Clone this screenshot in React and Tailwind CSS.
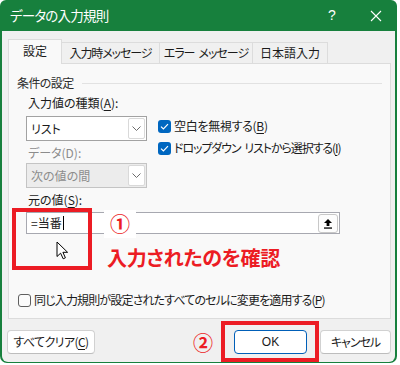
import React from 'react';

// 共通フォント（プロポーショナル仮名）
const jp = "font-['Noto_Sans_CJK_JP',sans-serif] [font-feature-settings:'palt']";

function Chevron({ className }) {
  return (
    <svg width="9" height="5" viewBox="0 0 9 5" className={className}>
      <path d="M0.5 0.5 L4.5 4.5 L8.5 0.5" fill="none" stroke="currentColor" strokeWidth="1" />
    </svg>
  );
}

function CheckBox({ checked }) {
  if (checked) {
    return (
      <div className="w-[13px] h-[13px] rounded-[3px] bg-[#0067c0] flex items-center justify-center flex-shrink-0">
        <svg width="9" height="7" viewBox="0 0 9 7">
          <path d="M1 3.6 L3.4 6 L8 1.2" fill="none" stroke="white" strokeWidth="1.2" />
        </svg>
      </div>
    );
  }
  return <div className="w-[13px] h-[13px] rounded-[3px] border border-[#5f5f5f] bg-[#fbfbfb] flex-shrink-0" />;
}

function Combo({ value, disabled }) {
  return (
    <div
      className={`h-[25px] w-[121px] flex border ${
        disabled ? 'border-[#c4c4c4] bg-[#ececec] text-[#8c8c8c]' : 'border-[#a2a2a2] bg-white text-[#1b1b1b]'
      }`}
    >
      <div className="flex-1 flex items-center pl-[4px]">{value}</div>
      <div className="w-[17px] my-px mr-px flex items-center justify-center border border-[#d9d9d9] rounded-[2px] bg-white text-[#6b6b6b]">
        <Chevron />
      </div>
    </div>
  );
}

export default function App() {
  return (
    <div className={`w-[400px] h-[365px] bg-white overflow-hidden relative text-[12px] text-[#1b1b1b] ${jp}`}>
      {/* ウィンドウ */}
      <div className="w-[397px] h-[363px] bg-[#17803d] rounded-t-[6px] rounded-b-[7px] px-[2px] pb-px flex flex-col">
        {/* タイトルバー */}
        <div className="h-[31px] flex items-center flex-shrink-0 text-white">
          <span className="pl-[8px] text-[13.5px] tracking-[-0.8px]">データの入力規則</span>
          <span className="ml-auto w-[20px] text-center text-[14px] font-['Liberation_Sans',sans-serif]">?</span>
          <div className="ml-[24px] mr-[9px] w-[20px] flex items-center justify-center">
            <svg width="12" height="12" viewBox="0 0 12 12">
              <path d="M1 1 L11 11 M11 1 L1 11" stroke="white" strokeWidth="1.1" />
            </svg>
          </div>
        </div>

        {/* 本体 */}
        <div className="flex-1 bg-[#f0f0f0] rounded-b-[6px] flex flex-col pt-[8px] pl-[6px] pr-[4px]">
          {/* タブ */}
          <div className="flex items-end h-[24px] relative z-10">
            <div className="h-[25px] -mb-px w-[54px] bg-[#f9f9f9] border border-b-0 border-[#dcdcdc] flex items-center justify-center pb-[2px]">
              設定
            </div>
            <div className="h-[21px] w-[98px] border-t border-r border-[#dcdcdc] flex items-center justify-center tracking-[-1.1px]">
              入力時メッセージ
            </div>
            <div className="h-[21px] w-[93px] border-t border-r border-[#dcdcdc] flex items-center justify-center tracking-[-1px]">
              エラー<span className="w-[4px]" />メッセージ
            </div>
            <div className="h-[21px] w-[75px] border-t border-r border-[#dcdcdc] flex items-center justify-center">
              日本語入力
            </div>
          </div>

          {/* パネル */}
          <div className="h-[256px] w-[383px] bg-[#f9f9f9] border border-[#dcdcdc] flex flex-col pl-[8px] pt-[11px]">
            <div className="h-[16px] flex items-center">
              <span className="text-[#2b2b2b] tracking-[-0.6px]">条件の設定</span>
              <div className="flex-1 h-px bg-[#e2e2e2] ml-[8px] mr-[8px]" />
            </div>

            <div className="pl-[9px] flex flex-col">
              <div className="mt-[4px] h-[16px] pl-[2px] flex items-center">
                入力値の種類(<u className="underline-offset-2">A</u>):
              </div>
              <div className="mt-[5px] flex">
                <div className="flex flex-col">
                  <Combo value="リスト" />
                  <div className="mt-[4px] h-[16px] pl-[2px] flex items-center text-[#8c8c8c]">データ(D):</div>
                  <div className="mt-[2px]">
                    <Combo value="次の値の間" disabled />
                  </div>
                </div>
                <div className="ml-[11px] pt-[2px] flex flex-col gap-[6px]">
                  <div className="h-[16px] flex items-center gap-[3px]">
                    <CheckBox checked />
                    <span className="tracking-[-0.3px]">
                      空白を無視する(<u className="underline-offset-2">B</u>)
                    </span>
                  </div>
                  <div className="h-[16px] flex items-center gap-[3px]">
                    <CheckBox checked />
                    <span className="tracking-[-1.1px] flex items-center">
                      ドロップダウン<span className="w-[4px]" />リストから選択する(<u className="underline-offset-2">I</u>)
                    </span>
                  </div>
                </div>
              </div>
              <div className="mt-[4px] h-[16px] pl-[2px] flex items-center">
                元の値(<u className="underline-offset-2">S</u>):
              </div>
              <div className="mt-[4px] h-[22px] w-[314px] bg-white border border-[#a7a8b0] flex items-center">
                <span className="pl-[4px]">=当番</span>
                <span className="w-px h-[14px] bg-black ml-px" />
                <div className="ml-auto mr-px h-[19px] w-[20px] border border-[#c8c8c8] rounded-[3px] bg-[#fdfdfd] flex items-center justify-center">
                  <svg width="10" height="11" viewBox="0 0 10 11">
                    <path d="M5 1 L1 5 L3.6 5 L3.6 8 L6.4 8 L6.4 5 L9 5 Z" fill="black" />
                    <rect x="1" y="9.4" width="8" height="1.3" fill="black" />
                  </svg>
                </div>
              </div>
            </div>

            <div className="mt-[58px] ml-px h-[16px] flex items-center gap-[3px]">
              <CheckBox />
              <span className="tracking-[-0.85px]">
                同じ入力規則が設定されたすべてのセルに変更を適用する(<u className="underline-offset-2">P</u>)
              </span>
            </div>
          </div>

          {/* ボタン */}
          <div className="mt-[11px] flex items-center">
            <button className="-ml-px h-[24px] w-[88px] bg-white border border-[#d1d1d1] border-b-[#bdbdbd] rounded-[4px] flex items-center justify-center tracking-[-0.6px]">
              すべてクリア(<u className="underline-offset-2">C</u>)
            </button>
            <button className="ml-auto h-[24px] w-[73px] bg-white border border-[#005fb8] rounded-[4px] flex items-center justify-center font-['Liberation_Sans',sans-serif]">
              OK
            </button>
            <button className="ml-[13px] h-[24px] w-[71px] bg-white border border-[#d1d1d1] border-b-[#bdbdbd] rounded-[4px] flex items-center justify-center tracking-[-1px]">
              キャンセル
            </button>
          </div>
        </div>
      </div>

      {/* 注釈 */}
      <div className="absolute left-[12px] top-[208px] w-[80px] h-[62px] border-[4px] border-[#ec1c24]" />
      <div className="absolute left-[104px] top-[210px] w-[32px] h-[28px] bg-white flex items-center justify-center">
        <span className="text-[#ec1c24] text-[20px] font-bold leading-none">①</span>
      </div>
      <div className="absolute left-[107px] top-[245px] text-[#ec1c24] text-[20px] font-bold leading-[26px] tracking-[-0.3px]">
        入力されたのを確認
      </div>
      <svg className="absolute left-[56px] top-[241px]" width="13" height="19" viewBox="0 0 13 19">
        <path
          d="M1 1 L1 15.5 L4.6 12.2 L7.2 17.8 L9.4 16.8 L6.9 11.3 L11.6 11.3 Z"
          fill="white"
          stroke="black"
          strokeWidth="1"
          strokeLinejoin="round"
        />
      </svg>
      <div className="absolute left-[193px] top-[331px] text-[#ec1c24] text-[20px] font-bold leading-[24px]">②</div>
      <div className="absolute left-[221px] top-[321px] w-[98px] h-[41px] border-[4px] border-[#ec1c24]" />
    </div>
  );
}
